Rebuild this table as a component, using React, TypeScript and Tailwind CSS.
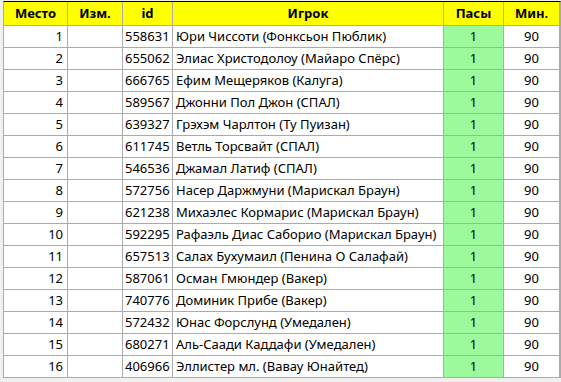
import React from "react";

const rows: [number, string, string][] = [
  [1, "558631", "Юри Чиссоти (Фонксьон Пюблик)"],
  [2, "655062", "Элиас Христодолоу (Майаро Спёрс)"],
  [3, "666765", "Ефим Мещеряков (Калуга)"],
  [4, "589567", "Джонни Пол Джон (СПАЛ)"],
  [5, "639327", "Грэхэм Чарлтон (Ту Пуизан)"],
  [6, "611745", "Ветль Торсвайт (СПАЛ)"],
  [7, "546536", "Джамал Латиф (СПАЛ)"],
  [8, "572756", "Насер Даржмуни (Марискал Браун)"],
  [9, "621238", "Михаэлес Кормарис (Марискал Браун)"],
  [10, "592295", "Рафаэль Диас Саборио (Марискал Браун)"],
  [11, "657513", "Салах Бухумаил (Пенина О Салафай)"],
  [12, "587061", "Осман Гмюндер (Вакер)"],
  [13, "740776", "Доминик Прибе (Вакер)"],
  [14, "572432", "Юнас Форслунд (Умедален)"],
  [15, "680271", "Аль-Саади Каддафи (Умедален)"],
  [16, "406966", "Эллистер мл. (Вавау Юнайтед)"],
];

export default function App() {
  return (
    <div
      className="w-[561px] h-[382px] bg-[#f0f0f0] pt-px pl-[3px] overflow-hidden text-[13px] text-black"
      style={{ fontFamily: '"Noto Sans", "Open Sans", sans-serif' }}
    >
      <div className="grid grid-cols-[63px_54px_49px_270px_59px_55px] gap-px bg-[#ababab] border-l border-r border-b border-[#ababab] border-t border-t-black w-[558px]">
        <div className="h-[23px] bg-[#ffff00] font-bold flex items-center justify-center">Место</div>
        <div className="h-[23px] bg-[#ffff00] font-bold flex items-center justify-center">Изм.</div>
        <div className="h-[23px] bg-[#ffff00] font-bold flex items-center justify-center">id</div>
        <div className="h-[23px] bg-[#ffff00] font-bold flex items-center justify-center">Игрок</div>
        <div className="h-[23px] bg-[#ffff00] font-bold flex items-center justify-center">Пасы</div>
        <div className="h-[23px] bg-[#ffff00] font-bold flex items-center justify-center">Мин.</div>
        {rows.map(([n, id, name]) => (
          <React.Fragment key={n}>
            <div className="h-[21px] bg-white flex items-center justify-end pr-[4px]">{n}</div>
            <div className="h-[21px] bg-white" />
            <div className="h-[21px] bg-white flex items-center pl-[2px]">{id}</div>
            <div className="h-[21px] bg-white flex items-center pl-[3px] whitespace-nowrap overflow-hidden">{name}</div>
            <div className="h-[21px] bg-[#9cf99c] flex items-center justify-center">1</div>
            <div className="h-[21px] bg-white flex items-center justify-center">90</div>
          </React.Fragment>
        ))}
      </div>
    </div>
  );
}
